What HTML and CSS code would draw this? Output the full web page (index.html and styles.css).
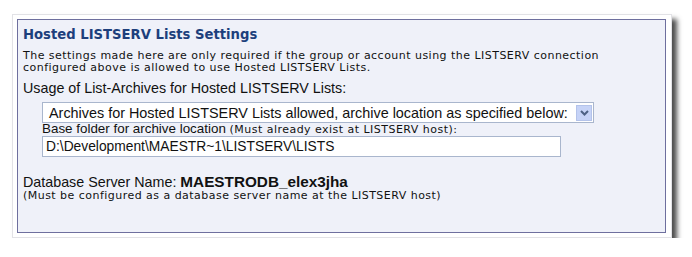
FILE: index.html
```html
<!DOCTYPE html>
<html lang="en">
<head>
    <meta charset="UTF-8">
    <title>Hosted LISTSERV Lists Settings</title>
    <link rel="stylesheet" href="styles.css">
</head>
<body>
    <div class="card">
        <div class="panel">
            <h2>Hosted LISTSERV Lists Settings</h2>
            <p class="note">The settings made here are only required if the group or account using the LISTSERV connection<br>configured above is allowed to use Hosted LISTSERV Lists.</p>
            <div class="label">Usage of List-Archives for Hosted LISTSERV Lists:</div>
            <div class="indent">
                <div class="select">
                    <span>Archives for Hosted LISTSERV Lists allowed, archive location as specified below:</span>
                    <span class="arrow">
                        <svg width="9" height="6" viewBox="0 0 9 6"><path d="M1 1 L4.5 4.5 L8 1" fill="none" stroke="#4d6185" stroke-width="2"/></svg>
                    </span>
                </div>
                <div class="label folder">Base folder for archive location <span class="hint">(Must already exist at LISTSERV host):</span></div>
                <div class="input">D:\Development\MAESTR~1\LISTSERV\LISTS</div>
            </div>
            <div class="label db">Database Server Name: <b>MAESTRODB_elex3jha</b></div>
            <div class="hint">(Must be configured as a database server name at the LISTSERV host)</div>
        </div>
    </div>
</body>
</html>
```
FILE: styles.css
```css
body {
    margin: 0;
    background-color: #fff;
    font-family: 'DejaVu Sans', Verdana, sans-serif;
    color: #111;
}
.card {
    margin: 14px 0 0 12px;
    width: 649px;
    height: 218px;
    padding: 4px 5px 0 4px;
    background-color: #fff;
    border: 1px solid #e2e2e6;
    box-shadow: 5px 5px 5px rgba(0,0,0,0.7);
}
.panel {
    height: 212px;
    border: 1px solid #6e6f9e;
    background-color: #eff1f9;
    padding: 0 5px;
}
h2 {
    margin: 7px 0 0 0;
    font-size: 13.2px;
    font-weight: bold;
    color: #1d3f7c;
    line-height: 15px;
}
.note {
    margin: 8px 0 0 0;
    font-size: 11px;
    letter-spacing: 0.47px;
    line-height: 12px;
}
.label {
    font-family: 'Liberation Sans', Arial, sans-serif;
    font-size: 14.3px;
    line-height: 16px;
    margin-top: 6px;
}
.label b {
    font-size: 15.3px;
}
.hint {
    font-family: 'DejaVu Sans', Verdana, sans-serif;
    font-size: 11px;
    letter-spacing: 0.47px;
    line-height: 12px;
}
.indent {
    padding-left: 19px;
    margin-top: 6px;
}
.select {
    display: flex;
    align-items: center;
    justify-content: space-between;
    width: 543px;
    height: 19px;
    padding: 0 1px 0 6px;
    background-color: #fff;
    border: 1px solid #a9b6cd;
    font-family: 'Liberation Sans', Arial, sans-serif;
    font-size: 14.4px;
}
.arrow {
    display: flex;
    align-items: center;
    justify-content: center;
    width: 16px;
    height: 16px;
    background-color: #c6d3f7;
    border: 1px solid #b4c3ea;
    box-sizing: border-box;
}
.folder {
    margin-top: 0;
    font-size: 13.4px;
    line-height: 11px;
}
.input {
    width: 514px;
    height: 19px;
    padding-left: 3px;
    background-color: #fff;
    border: 1px solid #a9b6cd;
    font-family: 'Liberation Sans', Arial, sans-serif;
    font-size: 13.8px;
    line-height: 19px;
}
.db {
    margin-top: 17px;
}
```
